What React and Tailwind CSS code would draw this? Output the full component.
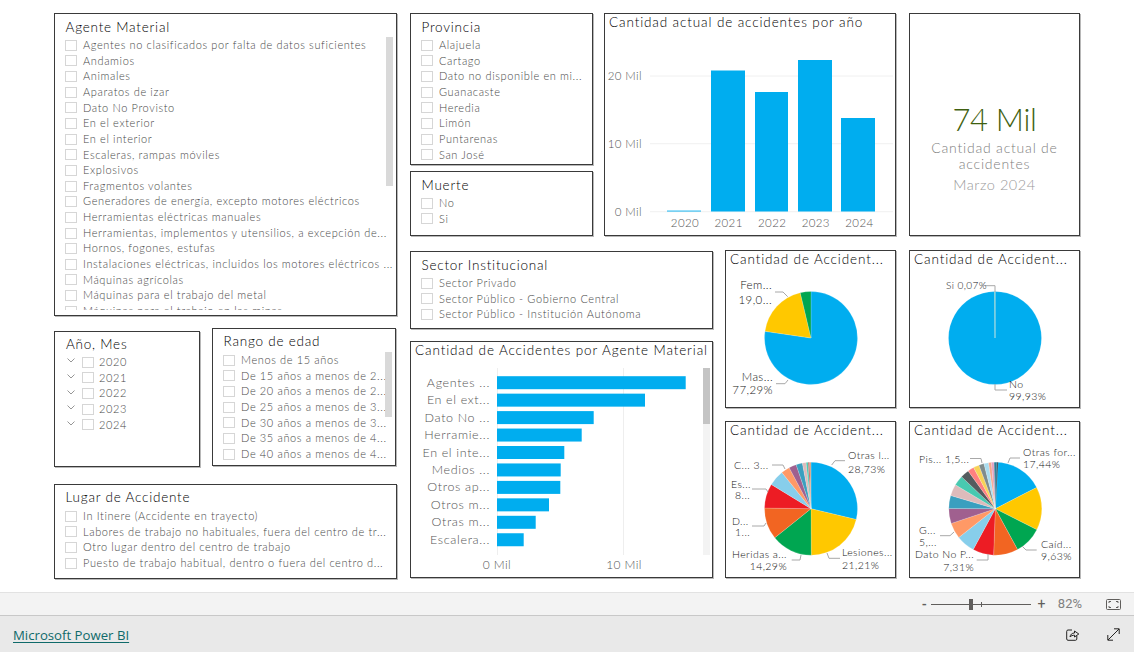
import React from "react";

const Check = () => <span className="w-[12px] h-[11px] shrink-0 border border-[#d6d6d6] bg-white" />;

function Rows({ items, clip }) {
  return (
    <div className={clip ? "overflow-hidden " + clip : ""}>
      {items.map((t) => (
        <div key={t} className="flex items-center h-[15.65px] whitespace-nowrap">
          <Check />
          <span className="ml-[6px] text-[11px] font-light tracking-[0.62px] text-[#484848]">{t}</span>
        </div>
      ))}
    </div>
  );
}

function Slicer({ title, items, className, pt = "pt-[5px]", mb = "mb-[2.5px]", clip, thumb }) {
  return (
    <section className={"relative bg-white border border-[#3a3a3a] shadow-[1px_1px_0_#b8b8b8] pl-[10px] " + pt + " " + className}>
      <h2 className={"ml-[0.5px] text-[13.5px] leading-[16px] h-[16px] tracking-[0.78px] font-light text-[#000000] " + mb}>{title}</h2>
      <Rows items={items} clip={clip} />
      {thumb}
    </section>
  );
}

const Panel = ({ className, children }) => (
  <section className={"bg-white border border-[#3a3a3a] shadow-[1px_1px_0_#b8b8b8] overflow-hidden " + className}>{children}</section>
);

const Label = ({ x, y, a = "start", s = 10.5, children }) => (
  <text x={x} y={y + 3.7} textAnchor={a} fontSize={s} fontWeight="300" fill="#141414" letterSpacing="0.42">{children}</text>
);

function Pie({ cx, cy, r, slices, colors }) {
  let acc = -Math.PI / 2;
  return slices.map((v, i) => {
    const a0 = acc;
    const a1 = acc + (v / 100) * Math.PI * 2;
    acc = a1;
    const large = a1 - a0 > Math.PI ? 1 : 0;
    const d = `M${cx} ${cy}L${cx + r * Math.cos(a0)} ${cy + r * Math.sin(a0)}A${r} ${r} 0 ${large} 1 ${cx + r * Math.cos(a1)} ${cy + r * Math.sin(a1)}Z`;
    return <path key={i} d={d} fill={colors[i % colors.length]} stroke="#ffffff" strokeOpacity="0.35" strokeWidth="0.5" />;
  });
}

const COLORS = ["#00ADEF", "#FFC800", "#00A651", "#F26522", "#ED1C24", "#87CEEB", "#FF9966", "#A0608F", "#3A9FBF", "#DDBBBB", "#48C9B0", "#555B5E", "#FF8080", "#F7D358", "#7F8C8D", "#A8DDF0", "#F5A58A", "#E0A0C0", "#2C7A96", "#37474F"];

const Lead = ({ p }) => <polyline points={p} fill="none" stroke="#a8a8a8" strokeWidth="1" />;

function PiePanel({ x, y, h, children }) {
  return (
    <Panel className="flex flex-col">
      <h3 className="pl-[4px] h-[18px] leading-[17px] text-[13.5px] tracking-[0.88px] font-light text-[#000000] whitespace-nowrap">Cantidad de Accident...</h3>
      <svg width="169" height={h} className="block">
        <g transform={`translate(${-(x + 1)} ${-(y + 19)})`}>{children}</g>
      </svg>
    </Panel>
  );
}

const agente = ["Agentes no clasificados por falta de datos suficientes", "Andamios", "Animales", "Aparatos de izar", "Dato No Provisto", "En el exterior", "En el interior", "Escaleras, rampas móviles", "Explosivos", "Fragmentos volantes", "Generadores de energía, excepto motores eléctricos", "Herramientas eléctricas manuales", "Herramientas, implementos y utensilios, a excepción de...", "Hornos, fogones, estufas", "Instalaciones eléctricas, incluidos los motores eléctricos ...", "Máquinas agrícolas", "Máquinas para el trabajo del metal", "Máquinas para el trabajo en las minas"];
const rango = ["Menos de 15 años", "De 15 años a menos de 2...", "De 20 años a menos de 2...", "De 25 años a menos de 3...", "De 30 años a menos de 3...", "De 35 años a menos de 4...", "De 40 años a menos de 4..."];
const lugar = ["In Itinere (Accidente en trayecto)", "Labores de trabajo no habituales, fuera del centro de tr...", "Otro lugar dentro del centro de trabajo", "Puesto de trabajo habitual, dentro o fuera del centro d..."];
const provincia = ["Alajuela", "Cartago", "Dato no disponible en mi...", "Guanacaste", "Heredia", "Limón", "Puntarenas", "San José"];
const sector = ["Sector Privado", "Sector Público - Gobierno Central", "Sector Público - Institución Autónoma"];
const years = ["2020", "2021", "2022", "2023", "2024"];

const cols = [[667, 34, 210.6], [711, 34, 70.5], [755, 33, 92], [798, 34, 60], [841, 34, 118]];
const hb = [["Agentes ...", 188.7], ["En el ext...", 148], ["Dato No ...", 96.7], ["Herramie...", 84.7], ["En el inte...", 67.3], ["Medios ...", 63.7], ["Otros ap...", 63.3], ["Otros m...", 52], ["Otras m...", 38.7], ["Escalera...", 26.7]];

export default function App() {
  return (
    <div className="h-[652px] w-full flex flex-col overflow-hidden bg-white font-[Lato,sans-serif]">
      <main className="h-[592px] flex gap-[13px] pl-[54px] pt-[13px]">
        <div className="w-[343px] shrink-0">
          <Slicer
            title="Agente Material"
            items={agente}
            className="w-[343px] h-[303px]"
            clip="h-[272px]"
            thumb={<div className="absolute left-[331px] top-[23px] w-[7px] h-[149px] bg-[#d9d9d9]" />}
          />
          <div className="flex items-start mt-[12px]">
            <section className="mt-[3px] w-[146px] h-[136px] bg-white border border-[#3a3a3a] shadow-[1px_1px_0_#b8b8b8] pl-[11px] pt-[4px]">
              <h2 className="text-[13.5px] leading-[16px] h-[16px] tracking-[0.78px] font-light text-[#000000] mb-[2.5px]">Año, Mes</h2>
              {years.map((y) => (
                <div key={y} className="flex items-center h-[15.65px]">
                  <svg width="8" height="5" viewBox="0 0 8 5" className="ml-[1px] mr-[7px] mb-[3px]"><path d="M0.5 0.5L4 4L7.5 0.5" fill="none" stroke="#8a8a8a" strokeWidth="0.9" /></svg>
                  <Check />
                  <span className="ml-[5px] text-[11px] font-light tracking-[0.62px] text-[#484848]">{y}</span>
                </div>
              ))}
            </section>
            <Slicer
              title="Rango de edad"
              items={rango}
              pt="pt-[4px]"
              mb="mb-[3.5px]"
              className="ml-[12px] w-[184px] h-[138px]"
              thumb={<div className="absolute left-[172px] top-[23px] w-[7px] h-[65px] bg-[#d9d9d9]" />}
            />
          </div>
          <Slicer title="Lugar de Accidente" items={lugar} pt="pt-[4px]" mb="mb-[3.5px]" className="mt-[17px] w-[343px] h-[95px]" />
        </div>

        <div className="w-[670px] shrink-0">
          <div className="flex h-[223px]">
            <div className="w-[183px] shrink-0">
              <Slicer title="Provincia" items={provincia} className="w-[183px] h-[152px]" />
              <Slicer title="Muerte" items={["No", "Si"]} className="mt-[6px] w-[183px] h-[65px]" />
            </div>
            <Panel className="ml-[11px] w-[292px] h-[223px] flex flex-col">
              <h3 className="pl-[4px] h-[18px] leading-[16px] text-[13.5px] tracking-[0.88px] font-light text-[#000000] whitespace-nowrap">Cantidad actual de accidentes por año</h3>
              <svg width="290" height="203" className="block">
                <g transform="translate(-605 -32)" fontWeight="300">
                  {[[76, "20 Mil"], [143.7, "10 Mil"], [211.7, "0 Mil"]].map(([y, t]) => (
                    <g key={t}>
                      <line x1="650" x2="893" y1={y} y2={y} stroke="#f0f0f0" strokeWidth="1" />
                      <text x="642" y={y + 4} textAnchor="end" fontSize="11.5" fill="#555" letterSpacing="0.4">{t}</text>
                    </g>
                  ))}
                  {cols.map(([x, w, top]) => <rect key={x} x={x} y={top} width={w} height={211.5 - top} fill="#00ADEF" />)}
                  {years.map((y, i) => <text key={y} x={685 + i * 43.6} y="227" textAnchor="middle" fontSize="11.5" fill="#555" letterSpacing="0.4">{y}</text>)}
                </g>
              </svg>
            </Panel>
            <Panel className="ml-[13px] w-[171px] h-[223px] flex flex-col items-center justify-center text-center pt-[45px]">
              <div className="text-[31px] leading-[36px] font-light text-[#3f5f10] tracking-[-0.3px]">74 Mil</div>
              <div className="mt-[3px] text-[14px] font-light leading-[16px] tracking-[0.78px] text-[#808080]">Cantidad actual de<br />accidentes</div>
              <div className="mt-[4px] text-[14.5px] font-light leading-[18px] tracking-[0.55px] text-[#999999]">Marzo 2024</div>
            </Panel>
          </div>

          <div className="flex mt-[14px]">
            <div className="w-[303px] shrink-0">
              <Slicer title="Sector Institucional" items={sector} className="mt-[1px] w-[303px] h-[78px]" />
              <Panel className="mt-[12px] w-[303px] h-[237px] flex flex-col">
                <h3 className="pl-[4px] h-[18px] leading-[17px] text-[13.5px] tracking-[0.88px] font-light text-[#000000] whitespace-nowrap">Cantidad de Accidentes por Agente Material</h3>
                <svg width="301" height="217" className="block">
                  <g transform="translate(-411 -360)" fontWeight="300">
                    <line x1="497.5" x2="497.5" y1="368" y2="555" stroke="#eeeeee" />
                    <line x1="623.5" x2="623.5" y1="368" y2="555" stroke="#eeeeee" />
                    {hb.map(([t, w], i) => (
                      <g key={t}>
                        <text x="490" y={382.7 + i * 17.45 + 4} textAnchor="end" fontSize="12.5" fill="#555" letterSpacing="0.65">{t}</text>
                        <rect x="497" y={376.2 + i * 17.45} width={w} height="13" fill="#00ADEF" />
                      </g>
                    ))}
                    <rect x="703" y="368" width="7" height="187" fill="#f3f3f3" />
                    <rect x="703" y="368" width="7" height="56" fill="#c4c4c4" />
                    <text x="497" y="569" textAnchor="middle" fontSize="12" fill="#555" letterSpacing="0.4">0 Mil</text>
                    <text x="624" y="569" textAnchor="middle" fontSize="12" fill="#555" letterSpacing="0.4">10 Mil</text>
                  </g>
                </svg>
              </Panel>
            </div>

            <div className="ml-[12px] grid grid-cols-[171px_171px] grid-rows-[158px_157px] gap-x-[13px] gap-y-[13px]">
              <PiePanel x={725} y={250} h={138}>
                <Pie cx={811} cy={338} r={46.5} slices={[77.29, 19.0, 3.71]} colors={COLORS} />
                <Lead p="775,292 783,292 787.7,296.7" />
                <Lead p="776,383.7 785,383.7 788,380" />
                <Label x={772} y={285.7} a="end" s={11.5}>Fem...</Label>
                <Label x={772} y={300} a="end" s={11.5}>19,0...</Label>
                <Label x={773} y={377} a="end" s={11.5}>Mas...</Label>
                <Label x={773} y={390.7} a="end" s={11.5}>77,29%</Label>
              </PiePanel>
              <PiePanel x={909} y={250} h={138}>
                <Pie cx={995} cy={338} r={46.5} slices={[99.93, 0.07]} colors={COLORS} />
                <line x1="995" x2="995" y1="292" y2="338" stroke="#7fcfdf" />
                <Lead p="985,285.7 995,285.7 995,292" />
                <Lead p="995,384 995,390 1007,390" />
                <Label x={946} y={285.7} s={10}>Si 0,07%</Label>
                <Label x={1009} y={384} s={10.5}>No</Label>
                <Label x={1009} y={396.7} s={10.5}>99,93%</Label>
              </PiePanel>
              <PiePanel x={725} y={421} h={137}>
                <Pie cx={811} cy={508.7} r={46.5} slices={[28.73, 21.21, 14.29, 11, 8.5, 5.5, 3, 2.6, 2.2, 1.3, 0.7, 0.5, 0.47]} colors={[...COLORS.slice(0, 10), "#48C9B0", "#C0504D", "#D0A080"]} />
                <Lead p="845,460.7 835,460.7 831.7,465" />
                <Lead p="772,465 783,465 785,469" />
                <Lead p="752,489 766,489 768,492" />
                <Lead p="752,526 764,526 766,523" />
                <Lead p="791.7,560 800,560 801,555" />
                <Lead p="840,558.3 829,558.3 827,553" />
                <Label x={848} y={455.7}>Otras l...</Label>
                <Label x={848} y={469}>28,73%</Label>
                <Label x={734} y={465.7}>C... 3...</Label>
                <Label x={731} y={484}>Es...</Label>
                <Label x={735} y={495.7}>8...</Label>
                <Label x={732} y={521}>D...</Label>
                <Label x={735} y={532}>1...</Label>
                <Label x={787} y={554.3} a="end">Heridas a...</Label>
                <Label x={787} y={566} a="end">14,29%</Label>
                <Label x={842} y={552.7}>Lesiones...</Label>
                <Label x={842} y={565}>21,21%</Label>
              </PiePanel>
              <PiePanel x={909} y={421} h={137}>
                <Pie cx={995.3} cy={508.7} r={46.5} slices={[17.44, 15, 9.63, 8.5, 7.31, 6.5, 5.5, 5.2, 4.5, 4, 3.5, 3, 2.2, 2, 1.8, 1.6, 1, 0.9, 0.9, 0.52]} colors={COLORS} />
                <Lead p="1020,458 1010,458 1008,463" />
                <Lead p="970,458.5 981,458.5 982,463" />
                <Lead p="940,535.7 950,535.7 954,532" />
                <Lead p="976.7,560 988,560 988,554" />
                <Lead p="1036.7,550 1026,550 1022,546" />
                <Label x={1023} y={452.3}>Otras for...</Label>
                <Label x={1023} y={464.3}>17,44%</Label>
                <Label x={919} y={459.3}>Pis... 1,5...</Label>
                <Label x={919} y={530}>G...</Label>
                <Label x={919} y={542}>5,...</Label>
                <Label x={974} y={554.3} a="end">Dato No P...</Label>
                <Label x={974} y={567.7} a="end">7,31%</Label>
                <Label x={1041} y={544.3}>Caíd...</Label>
                <Label x={1041} y={556.3}>9,63%</Label>
              </PiePanel>
            </div>
          </div>
        </div>
      </main>

      <div className="h-[24px] shrink-0 bg-[#f3f3f3] border-t border-[#e2e2e2] border-b border-b-[#c8c8c8] flex items-center justify-end pr-[13px] font-[Roboto,sans-serif] text-[#605e5c]">
        <span className="text-[13px] leading-none font-bold mr-[3px] w-[7px] text-center">-</span>
        <div className="relative w-[100px] h-[1px] bg-[#605e5c] mr-[6px]">
          <span className="absolute left-[38px] top-[-5px] w-[4px] h-[11px] bg-[#605e5c]" />
          <span className="absolute left-[50px] top-[-2px] w-[1px] h-[5px] bg-[#605e5c]" />
        </div>
        <span className="text-[14px] leading-none w-[9px] text-center">+</span>
        <span className="ml-[12px] text-[13px] text-[#808080]">82%</span>
        <svg width="15" height="11" viewBox="0 0 15 11" className="ml-[24px]" fill="none" stroke="#605e5c">
          <rect x="0.5" y="0.5" width="14" height="10" rx="1" />
          <path d="M3 4V2.5H5M10 2.5H12V4M3 7V8.5H5M10 8.5H12V7" />
        </svg>
      </div>

      <footer className="flex-1 bg-[#e9e9e9] flex items-center pl-[13px] pr-[14px] pt-[3px] font-['Open_Sans',sans-serif]">
        <a className="text-[13.2px] font-medium text-[#0f6a6a] underline underline-offset-2 leading-none">Microsoft Power BI</a>
        <div className="ml-auto flex items-center gap-[27px] mb-[3px]">
          <svg width="14" height="13" viewBox="0 0 14 13" fill="none" stroke="#252423" strokeWidth="1">
            <path d="M6 2H2C1.2 2 0.7 2.5 0.7 3.3V11C0.7 11.7 1.2 12.3 2 12.3H9.5C10.3 12.3 10.8 11.7 10.8 11V8" />
            <path d="M4 9C4.3 6.5 6 5 8.5 5V3L12.8 6L8.5 9V7.2C6.8 7.2 5 7.7 4 9Z" />
          </svg>
          <svg width="13" height="13" viewBox="0 0 13 13" fill="none" stroke="#252423" strokeWidth="1">
            <path d="M1 12L12 1M7 0.8H12.2V6M0.8 7V12.2H6" />
          </svg>
        </div>
      </footer>
    </div>
  );
}
